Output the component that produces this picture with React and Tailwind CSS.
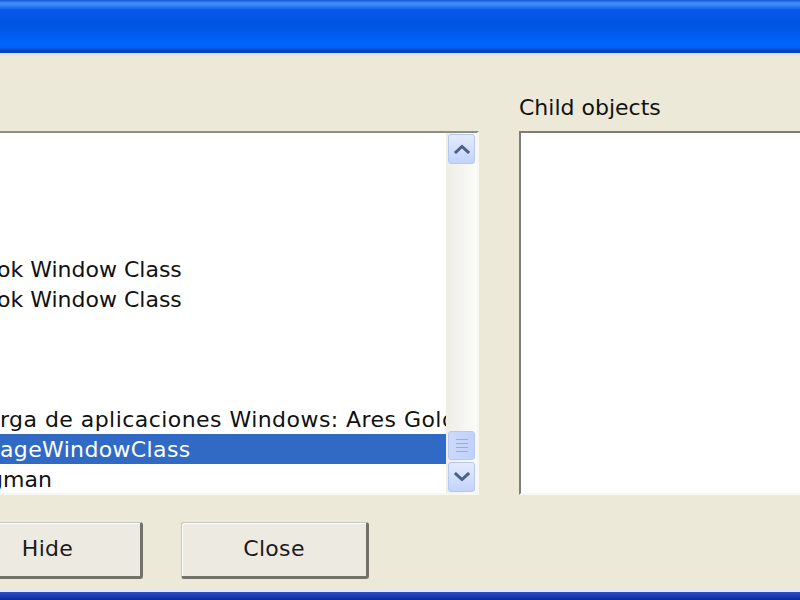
import React from "react";

const rows = [
  { t: "", c: "" },
  { t: "", c: "" },
  { t: "", c: "" },
  { t: "", c: "" },
  { t: "ok Window Class", c: "ml-[-3px]" },
  { t: "ok Window Class", c: "ml-[-3px]" },
  { t: "", c: "" },
  { t: "", c: "" },
  { t: "", c: "" },
  { t: "rga de aplicaciones Windows: Ares Gold", c: "ml-[0px] tracking-[0.45px]" },
  { t: "ageWindowClass", c: "ml-[0px] tracking-[0.35px]", sel: true },
  { t: "gman", c: "ml-[-11px]" },
];

function Chevron({ up }) {
  return (
    <svg width="16" height="10" viewBox="0 0 16 10">
      <path
        d={up ? "M2 8 L8 2.5 L14 8" : "M2 2 L8 7.5 L14 2"}
        fill="none"
        stroke="#4D6185"
        strokeWidth="3"
        strokeLinecap="square"
      />
    </svg>
  );
}

function ScrollBtn({ up }) {
  return (
    <div className="h-[30px] mx-[2px] rounded-[3px] border border-[#B6C8F2] bg-[linear-gradient(to_bottom,#E3EBFE,#C3D3FB)] flex items-center justify-center">
      <Chevron up={up} />
    </div>
  );
}

function XpButton({ label, extra }) {
  return (
    <div
      className={
        "h-[57px] rounded-[3px] border-t border-l border-t-[#C8C6B8] border-l-[#C8C6B8] border-r-[3px] border-b-[3px] border-r-[#72716A] border-b-[#72716A] bg-[#EDEBE1] shadow-[inset_1px_1px_0_#FFFFFF] flex items-center justify-center text-[22px] tracking-[0.3px] text-[#1A1A1A] pb-[2px] " +
        extra
      }
    >
      {label}
    </div>
  );
}

export default function App() {
  return (
    <div className="w-[800px] h-[600px] overflow-hidden flex flex-col bg-[#ECE9D8] font-['DejaVu_Sans',Verdana,sans-serif]">
      {/* title bar */}
      <div className="h-[53px] shrink-0 bg-[linear-gradient(to_bottom,#1657D6_0px,#3D8EF8_3px,#3A8AF6_5px,#0858EC_10px,#0053E2_24px,#005BEE_34px,#0066FC_44px,#0062F6_48px,#0047C8_50px,#0A3CB4_53px)]" />
      <div className="h-[3px] shrink-0 bg-[linear-gradient(to_bottom,#D6E0EE,#E8E8E0)]" />

      {/* body */}
      <div className="flex-1 flex flex-col overflow-hidden">
        <div className="grid grid-cols-[483px_300px] gap-x-[40px] ml-[-4px] mt-[39px]">
          <div className="h-[26px]" />
          <div className="h-[26px] leading-[26px] text-[22px] text-[#111111] whitespace-nowrap">
            Child objects
          </div>

          {/* left list */}
          <div className="mt-[10px] h-[364px] border-t-2 border-l-2 border-t-[#8F8E86] border-l-[#8F8E86] border-b-2 border-r-2 border-b-[#F7F6F0] border-r-[#F7F6F0] bg-white flex">
            <div className="flex-1 overflow-hidden pt-[1px] pl-[2px]">
              {rows.map((r, i) => (
                <div
                  key={i}
                  className={
                    "h-[30px] leading-[30px] pt-[1px] text-[22px] whitespace-nowrap overflow-hidden " +
                    (r.sel ? "bg-[#316AC5] text-white" : "text-[#111111]")
                  }
                >
                  <span className={"inline-block " + r.c}>{r.t}</span>
                </div>
              ))}
            </div>
            <div className="w-[31px] shrink-0 bg-[linear-gradient(to_right,#EEEDE6,#FBFBF8)] flex flex-col py-[1px]">
              <ScrollBtn up />
              <div className="flex-1" />
              <div className="h-[29px] mx-[2px] rounded-[3px] border border-[#B6C8F2] bg-[linear-gradient(to_right,#CBDAFC,#C0D1FB)] flex flex-col items-center justify-center gap-[3px]">
                <div className="w-[12px] h-[1px] bg-[#8FAEF0]" />
                <div className="w-[12px] h-[1px] bg-[#8FAEF0]" />
                <div className="w-[12px] h-[1px] bg-[#8FAEF0]" />
                <div className="w-[12px] h-[1px] bg-[#8FAEF0]" />
              </div>
              <div className="h-[2px]" />
              <ScrollBtn />
            </div>
          </div>

          {/* right list */}
          <div className="mt-[10px] h-[364px] border-t-2 border-l-2 border-t-[#7E7D76] border-l-[#7E7D76] border-b-2 border-b-[#F7F6F0] bg-white" />
        </div>

        {/* buttons */}
        <div className="flex gap-[38px] mt-[27px] ml-[-46px]">
          <XpButton label="Hide" extra="w-[189px]" />
          <XpButton label="Close" extra="w-[188px]" />
        </div>
        <div className="flex-1" />
      </div>

      {/* bottom frame */}
      <div className="h-[2px] shrink-0 bg-[#E2E8F4]" />
      <div className="h-[8px] shrink-0 bg-[linear-gradient(to_bottom,#2C4FC8,#0B2A9A)]" />
    </div>
  );
}
